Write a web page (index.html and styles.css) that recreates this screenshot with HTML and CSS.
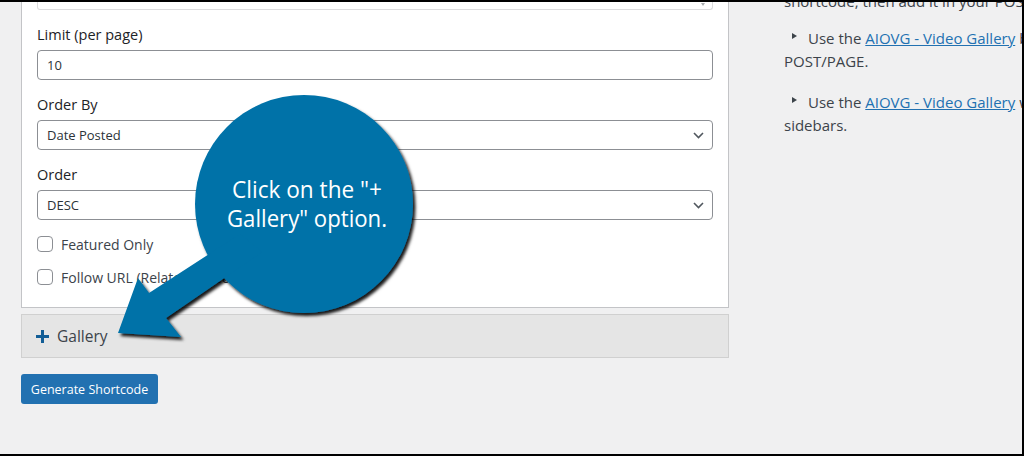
FILE: index.html
```html
<!DOCTYPE html>
<html lang="en">
<head>
<meta charset="utf-8">
<title>Shortcode Builder</title>
<link rel="stylesheet" href="styles.css">
</head>
<body>
<div class="screen">
  <div class="main">
    <div class="panel">
      <div class="stub"><span class="scroll-mark"></span></div>
      <div class="field">
        <label class="field-label">Limit (per page)</label>
        <div class="input">10</div>
      </div>
      <div class="field">
        <label class="field-label">Order By</label>
        <div class="input select">
          <span>Date Posted</span>
          <svg class="chev" width="11" height="7" viewBox="0 0 11 7"><path d="M1 1 L5.5 5.5 L10 1" fill="none" stroke="#50575e" stroke-width="1.6"/></svg>
        </div>
      </div>
      <div class="field">
        <label class="field-label">Order</label>
        <div class="input select">
          <span>DESC</span>
          <svg class="chev" width="11" height="7" viewBox="0 0 11 7"><path d="M1 1 L5.5 5.5 L10 1" fill="none" stroke="#50575e" stroke-width="1.6"/></svg>
        </div>
      </div>
      <div class="checks">
        <div class="check"><span class="box"></span>Featured Only</div>
        <div class="check"><span class="box"></span>Follow URL (Related Videos)</div>
      </div>
    </div>
    <div class="accordion">
      <svg class="plus" width="13" height="13" viewBox="0 0 13 13"><rect x="5" y="0" width="3" height="13" fill="#135e96"/><rect x="0" y="5" width="13" height="3" fill="#135e96"/></svg>
      <span>Gallery</span>
    </div>
    <button class="btn">Generate Shortcode</button>
  </div>
  <div class="side">
    <p class="cut">shortcode, then add it in your POST/PAGE.</p>
    <p class="item"><span class="tri"></span>Use the <a href="#">AIOVG - Video Gallery</a> block to add the gallery in your<br>POST/PAGE.</p>
    <p class="item"><span class="tri"></span>Use the <a href="#">AIOVG - Video Gallery</a> widget to add the gallery in your<br>sidebars.</p>
  </div>
</div>
<svg class="callout" width="1024" height="456" viewBox="0 0 1024 456">
  <defs>
    <filter id="sh" x="-20%" y="-20%" width="150%" height="150%">
      <feDropShadow dx="2.5" dy="3" stdDeviation="1.5" flood-color="#000" flood-opacity="0.9"/>
    </filter>
  </defs>
  <g filter="url(#sh)">
    <circle cx="304" cy="204" r="109" fill="#0572a8"/>
    <polygon points="118,333 138,278 149,293 240,234 262,252 166,318 181,337" fill="#0572a8"/>
  </g>
  <text class="callout-text" x="307" y="198" text-anchor="middle" textLength="150" lengthAdjust="spacingAndGlyphs">Click on the "+</text>
  <text class="callout-text" x="307" y="227" text-anchor="middle" textLength="160" lengthAdjust="spacingAndGlyphs">Gallery" option.</text>
</svg>
</body>
</html>
```

FILE: styles.css
```css
body {
  margin: 0;
  background: #000;
  font-family: "Open Sans", "Liberation Sans", sans-serif;
  position: relative;
}

.screen {
  margin-top: 2px;
  width: 1022px;
  height: 452px;
  background: #f0f0f1;
  display: flex;
  overflow: hidden;
}

.main {
  flex: none;
  width: 708px;
  padding-left: 21px;
}

.panel {
  background: #fff;
  border: 1px solid #c3c4c7;
  border-top: 0;
  padding: 0 15px 20px;
}

.stub {
  height: 7px;
  border: 1px solid #dcdcde;
  border-top: 0;
  border-radius: 0 0 3px 3px;
  position: relative;
}

.scroll-mark {
  position: absolute;
  right: 7px;
  top: 1px;
  width: 0;
  height: 0;
  border-left: 2.5px solid transparent;
  border-right: 2.5px solid transparent;
  border-top: 3px solid #a7aaad;
}

.field {
  margin-top: 15px;
}

.field-label {
  display: block;
  font-size: 14.5px;
  line-height: 20px;
  color: #1d2327;
  margin-bottom: 5px;
}

.input {
  height: 30px;
  box-sizing: border-box;
  border: 1px solid #8c8f94;
  border-radius: 4px;
  padding: 0 9px;
  font-size: 13px;
  color: #2c3338;
  display: flex;
  align-items: center;
  justify-content: space-between;
}

.select {
  padding-right: 8px;
}

.chev {
  display: block;
}

.checks {
  margin-top: 14px;
}

.check {
  height: 20px;
  display: flex;
  align-items: center;
  font-size: 14px;
  color: #3c434a;
}

.check + .check {
  margin-top: 13px;
}

.box {
  width: 16px;
  height: 16px;
  box-sizing: border-box;
  border: 1px solid #8c8f94;
  border-radius: 4px;
  margin-right: 8px;
  background: #fff;
}

.accordion {
  margin-top: 6px;
  height: 44px;
  box-sizing: border-box;
  background: #e5e5e5;
  border: 1px solid #d0d0d0;
  display: flex;
  align-items: center;
  padding-left: 14px;
  font-size: 15.5px;
  color: #3c434a;
}

.plus {
  display: block;
  margin-right: 8px;
  margin-top: 1px;
}

.btn {
  margin-top: 16px;
  width: 137px;
  height: 30px;
  padding: 0;
  border: 0;
  border-radius: 3px;
  background: #2271b1;
  color: #fff;
  font-family: "Open Sans", "Liberation Sans", sans-serif;
  font-size: 12.5px;
}

.side {
  flex: 1;
  min-width: 0;
  padding-left: 55px;
  white-space: nowrap;
  overflow: hidden;
  font-size: 15px;
  line-height: 23px;
  color: #3c434a;
}

.side p {
  margin: 0;
}

.side .cut {
  margin-top: -12px;
  margin-bottom: 14px;
}

.side .item {
  margin-bottom: 18px;
}

.side a {
  color: #2271b1;
  text-decoration: underline;
}

.tri {
  display: inline-block;
  width: 0;
  height: 0;
  border-left: 5px solid #3c434a;
  border-top: 3px solid transparent;
  border-bottom: 3px solid transparent;
  margin-left: 8px;
  margin-right: 11px;
  vertical-align: 5px;
}

.callout {
  position: absolute;
  top: 0;
  left: 0;
  pointer-events: none;
}

.callout-text {
  font-family: "Open Sans", sans-serif;
  font-size: 24px;
  fill: #fff;
}
```
